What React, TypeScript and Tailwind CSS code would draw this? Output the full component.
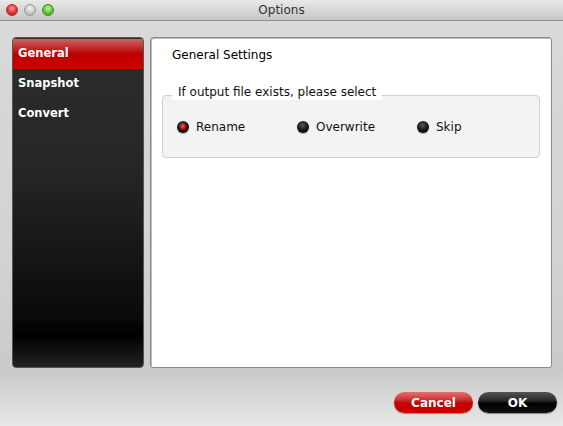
import { useState } from "react";

const FONT = "font-['DejaVu_Sans',_'Liberation_Sans',_sans-serif]";

const NAV = ["General", "Snapshot", "Convert"];

function Radio({ checked }: { checked: boolean }) {
  return (
    <span className="relative w-[12px] h-[12px] rounded-full bg-[radial-gradient(circle_at_45%_35%,#555_0%,#111_55%,#000_100%)] shadow-[0_1px_1px_rgba(0,0,0,0.35)] flex items-center justify-center">
      {checked && (
        <span className="w-[6px] h-[6px] rounded-full bg-[radial-gradient(circle_at_45%_35%,#ff5a5a_0%,#d00000_60%,#900000_100%)]" />
      )}
    </span>
  );
}

export default function App() {
  const [active, setActive] = useState("General");
  const [choice, setChoice] = useState("Rename");

  return (
    <div className={`w-[563px] h-[426px] flex flex-col overflow-hidden bg-[linear-gradient(to_bottom,#dadada_0%,#d2d2d2_60%,#cacaca_87%,#e8e8e8_100%)] ${FONT}`}>
      {/* title bar */}
      <div className="relative h-[21px] flex items-center justify-center bg-[linear-gradient(to_bottom,#e9e9e9,#c6c6c6)] border-b border-[#8f8f8f]">
        <div className="absolute left-[6px] top-[4px] flex gap-[6px]">
          <span className="w-[12px] h-[12px] rounded-full border border-[#a33] bg-[radial-gradient(circle_at_50%_35%,#ff9a9a_0%,#e23030_55%,#b31515_100%)]" />
          <span className="w-[12px] h-[12px] rounded-full border border-[#999] bg-[radial-gradient(circle_at_50%_35%,#f4f4f4_0%,#c8c8c8_55%,#a8a8a8_100%)]" />
          <span className="w-[12px] h-[12px] rounded-full border border-[#4a8a2a] bg-[radial-gradient(circle_at_50%_35%,#c8f5a0_0%,#5cc13a_55%,#3a8f1c_100%)]" />
        </div>
        <span className="text-[12px] text-[#333] leading-none">Options</span>
      </div>

      <div className="flex gap-[6px] pl-[12px] pt-[16px]">
        {/* sidebar */}
        <div className="w-[132px] h-[331px] rounded-[4px] overflow-hidden border border-[#555] bg-[linear-gradient(to_bottom,#2c2c2c_0%,#262626_40%,#0a0a0a_85%,#000_90%,#222_100%)] pt-[1px]">
          {NAV.map(n => (
            <button
              key={n}
              onClick={() => setActive(n)}
              className={`w-full h-[30px] flex items-center pl-[5px] text-[11.5px] font-bold text-white ${
                active === n
                  ? "bg-[linear-gradient(to_bottom,#d26060_0%,#c43a3a_22%,#bb0000_50%,#cf0000_100%)]"
                  : ""
              }`}
            >
              {n}
            </button>
          ))}
        </div>

        {/* content panel */}
        <div className="w-[402px] h-[331px] rounded-[3px] bg-white border border-[#8a8a8a] shadow-[inset_1px_1px_0_#bdbdbd] px-[11px]">
          <p className="text-[12px] text-black mt-[10px] ml-[10px] leading-[14px]">General Settings</p>

          <div className="relative mt-[33px] h-[63px] rounded-[4px] border border-[#d0d0d0] bg-[#f3f3f3]">
            <span className="absolute left-[9px] top-[-12px] px-[6px] py-[1px] bg-white text-[12px] text-[#111] leading-[14px]">
              If output file exists, please select
            </span>
            <div className="flex items-center h-full pl-[14px] pt-[1px]">
              {["Rename", "Overwrite", "Skip"].map(o => (
                <button
                  key={o}
                  onClick={() => setChoice(o)}
                  className="w-[120px] flex items-center gap-[7px] text-[12px] text-[#111]"
                >
                  <Radio checked={choice === o} />
                  {o}
                </button>
              ))}
            </div>
          </div>
        </div>
      </div>

      {/* footer buttons */}
      <div className="flex justify-end gap-[5px] pr-[6px] mt-[24px]">
        <button className="w-[79px] h-[21px] rounded-full bg-[linear-gradient(to_bottom,#e07070_0%,#d24040_30%,#c00000_55%,#d00000_100%)] shadow-[0_1px_1px_rgba(0,0,0,0.4)] text-white text-[12px] font-bold">
          Cancel
        </button>
        <button className="w-[79px] h-[21px] rounded-full bg-[linear-gradient(to_bottom,#555_0%,#2a2a2a_40%,#000_55%,#111_100%)] shadow-[0_1px_1px_rgba(0,0,0,0.4)] text-white text-[12px] font-bold">
          OK
        </button>
      </div>
    </div>
  );
}
